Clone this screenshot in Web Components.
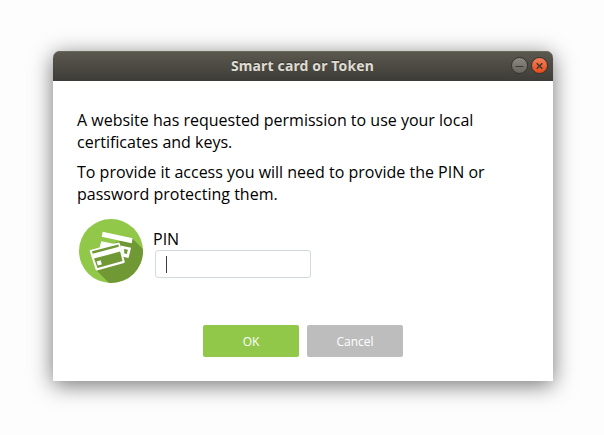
<!DOCTYPE html>
<html lang="en"><head><meta charset="utf-8"><title>Smart card or Token</title>
<style>
html,body{margin:0;height:100%;background:#fdfdfd;overflow:hidden}
body{font-family:"Open Sans",sans-serif;color:#000}
</style></head><body>
<pin-dialog></pin-dialog>
<script>
const define=(name,html)=>customElements.define(name,class extends HTMLElement{
  constructor(){super();const t=document.createElement('template');t.innerHTML=html;
  this.attachShadow({mode:'open'}).append(t.content.cloneNode(true));}
});
define('window-button',`<style>
:host{display:block;width:17px;height:17px;box-sizing:border-box;border:1px solid #34332e;border-radius:50%;background:linear-gradient(#8b8981,#66645d)}
:host([kind=close]){background:linear-gradient(#f67e59,#e64c1b)}
svg{display:none;width:15px;height:15px}
:host([kind=close]) .c,:host([kind=min]) .m{display:block}
path{stroke:#3a3833;fill:none}
</style><svg class="m" viewBox="0 0 15 15"><path d="M3.5 8.5h8"/></svg>
<svg class="c" viewBox="0 0 15 15"><path d="M4.7 5.2l5.6 5.6M10.3 5.2L4.7 10.8" stroke-width="1.4"/></svg>`);
define('title-bar',`<style>
:host{display:grid;grid-template-columns:1fr auto 1fr;align-items:center;height:30px;box-sizing:border-box;padding:0 5px 0 4px;border-radius:7px 7px 0 0;background:linear-gradient(#5b594f,#3d3c37);box-shadow:inset 0 1px #696a5b;color:#dfdbd2;font:bold 14px/30px "Noto Sans",sans-serif}
.t{grid-column:2;letter-spacing:.14px;text-shadow:0 -1px #33322e}
.b{display:flex;justify-content:flex-end;gap:3px;margin-bottom:1px}
</style><div class="t"><slot></slot></div><div class="b"><window-button kind="min"></window-button><window-button kind="close"></window-button></div>`);
define('card-badge',`<style>:host{display:block;width:64px;height:64px}svg{display:block}</style>
<svg width="64" height="64" viewBox="0 0 64 64"><defs><clipPath id="d"><circle cx="32" cy="32" r="32"/></clipPath></defs>
<circle cx="32" cy="32" r="32" fill="#92c849"/>
<g clip-path="url(#d)"><path d="M17.3 51.3L37 23L53.4 19.4L75 41V75H41Z" fill="#709835"/></g>
<path d="M23.7 12.8L53.6 19.2L52.7 24.2L22.7 17.7Z" fill="#fff"/>
<path d="M22.3 22.2L37 25.2L20.4 29.2Z" fill="#fff"/>
<path d="M41.3 26.4L52.1 28.8L49.5 39L44 37.7Z" fill="#fff"/>
<path d="M45 29.9L48.9 30.7L47.8 35L45.4 34.5Z" fill="#709835"/>
<path d="M11.3 30.9L39.6 23.5Q40.5 23.4 40.7 24.3L45.7 42.6Q45.9 43.6 45 43.9L18 51.5Q17 51.7 16.7 50.8L10.7 32Q10.6 31.2 11.3 30.9Z" fill="#fff"/>
<path d="M13 32.3L39.3 25.5L39.9 27.8L13.7 34.7Z" fill="#709835"/>
<path d="M15 39.6L41.1 32.6L43.5 41.9L18.5 49Z" fill="#709835"/>
<path d="M17.5 42.4L21.7 41.3L22.8 45.4L18.8 46.5Z" fill="#fff"/>
</svg>`);
define('pin-field',`<style>
:host{display:block;font-size:16px;line-height:22px}
label{display:block}
.f{display:flex;align-items:center;width:156px;height:28px;box-sizing:border-box;margin:0 0 0 2px;padding-left:10px;border:1px solid #d3dadd;border-radius:3px;background:#fff}
i{display:block;width:1px;height:17px;background:#3b3b47}
</style><label><slot></slot></label><div class="f"><i></i></div>`);
define('action-button',`<style>
:host{display:block;width:96px;height:32px;border-radius:2px;background:#bdbdbd;color:#fff;font-size:12px;line-height:33px;text-align:center}
:host([primary]){background:#92c849}
</style><slot></slot>`);
define('pin-dialog',`<style>
:host{display:flex;justify-content:center;padding-top:51px}
.w{width:500px;height:330px;margin-right:-2px;border-radius:7px 7px 0 0;background:#fff;box-shadow:0 4px 22px rgba(0,0,0,.55)}
.c{padding:28px 24px 0}
p{margin:0 0 8px;font-size:16px;line-height:22px}
.r{display:flex;gap:10px;margin-top:14px;padding-left:2px;height:64px}
pin-field{margin-top:9px}
.a{display:flex;justify-content:center;gap:8px;margin-top:42px}
</style><section class="w"><title-bar>Smart card or Token</title-bar><div class="c">
<p>A website has requested permission to use your local<br>certificates and keys.</p>
<p>To provide it access you will need to provide the PIN or<br>password protecting them.</p>
<div class="r"><card-badge></card-badge><pin-field>PIN</pin-field></div>
<div class="a"><action-button primary>OK</action-button><action-button>Cancel</action-button></div></div></section>`);
</script></body></html>
